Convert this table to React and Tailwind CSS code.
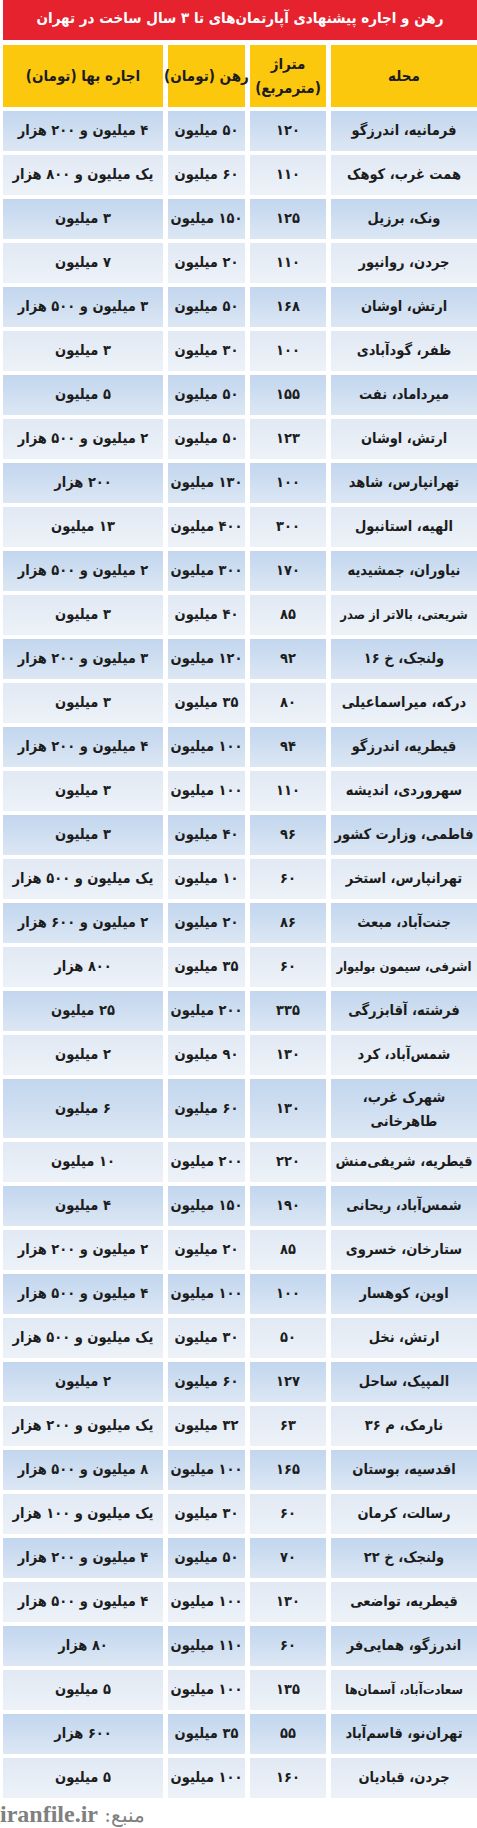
import React from "react";

const rows = [
  ["فرمانیه، اندرزگو", "۱۲۰", "۵۰ میلیون", "۴ میلیون و ۲۰۰ هزار"],
  ["همت غرب، کوهک", "۱۱۰", "۶۰ میلیون", "یک میلیون و ۸۰۰ هزار"],
  ["ونک، برزیل", "۱۲۵", "۱۵۰ میلیون", "۳ میلیون"],
  ["جردن، روانپور", "۱۱۰", "۲۰ میلیون", "۷ میلیون"],
  ["ارتش، اوشان", "۱۶۸", "۵۰ میلیون", "۳ میلیون و ۵۰۰ هزار"],
  ["ظفر، گودآبادی", "۱۰۰", "۳۰ میلیون", "۳ میلیون"],
  ["میرداماد، نفت", "۱۵۵", "۵۰ میلیون", "۵ میلیون"],
  ["ارتش، اوشان", "۱۲۳", "۵۰ میلیون", "۲ میلیون و ۵۰۰ هزار"],
  ["تهرانپارس، شاهد", "۱۰۰", "۱۳۰ میلیون", "۲۰۰ هزار"],
  ["الهیه، استانبول", "۳۰۰", "۴۰۰ میلیون", "۱۳ میلیون"],
  ["نیاوران، جمشیدیه", "۱۷۰", "۳۰۰ میلیون", "۲ میلیون و ۵۰۰ هزار"],
  ["شریعتی، بالاتر از صدر", "۸۵", "۴۰ میلیون", "۳ میلیون", "small"],
  ["ولنجک، خ ۱۶", "۹۲", "۱۲۰ میلیون", "۳ میلیون و ۲۰۰ هزار"],
  ["درکه، میراسماعیلی", "۸۰", "۳۵ میلیون", "۳ میلیون"],
  ["قیطریه، اندرزگو", "۹۴", "۱۰۰ میلیون", "۴ میلیون و ۲۰۰ هزار"],
  ["سهروردی، اندیشه", "۱۱۰", "۱۰۰ میلیون", "۳ میلیون"],
  ["فاطمی، وزارت کشور", "۹۶", "۴۰ میلیون", "۳ میلیون"],
  ["تهرانپارس، استخر", "۶۰", "۱۰ میلیون", "یک میلیون و ۵۰۰ هزار"],
  ["جنت‌آباد، مبعث", "۸۶", "۲۰ میلیون", "۲ میلیون و ۶۰۰ هزار"],
  ["اشرفی، سیمون بولیوار", "۶۰", "۳۵ میلیون", "۸۰۰ هزار", "small"],
  ["فرشته، آقابزرگی", "۳۳۵", "۲۰۰ میلیون", "۲۵ میلیون"],
  ["شمس‌آباد، کرد", "۱۳۰", "۹۰ میلیون", "۲ میلیون"],
  ["شهرک غرب، طاهرخانی", "۱۳۰", "۶۰ میلیون", "۶ میلیون", "tall"],
  ["قیطریه، شریفی‌منش", "۲۲۰", "۲۰۰ میلیون", "۱۰ میلیون"],
  ["شمس‌آباد، ریحانی", "۱۹۰", "۱۵۰ میلیون", "۴ میلیون"],
  ["ستارخان، خسروی", "۸۵", "۲۰ میلیون", "۲ میلیون و ۲۰۰ هزار"],
  ["اوین، کوهسار", "۱۰۰", "۱۰۰ میلیون", "۴ میلیون و ۵۰۰ هزار"],
  ["ارتش، نخل", "۵۰", "۳۰ میلیون", "یک میلیون و ۵۰۰ هزار"],
  ["المپیک، ساحل", "۱۲۷", "۶۰ میلیون", "۲ میلیون"],
  ["نارمک، م ۳۶", "۶۳", "۳۲ میلیون", "یک میلیون و ۲۰۰ هزار"],
  ["اقدسیه، بوستان", "۱۶۵", "۱۰۰ میلیون", "۸ میلیون و ۵۰۰ هزار"],
  ["رسالت، کرمان", "۶۰", "۳۰ میلیون", "یک میلیون و ۱۰۰ هزار"],
  ["ولنجک، خ ۲۲", "۷۰", "۵۰ میلیون", "۴ میلیون و ۲۰۰ هزار"],
  ["قیطریه، تواضعی", "۱۳۰", "۱۰۰ میلیون", "۴ میلیون و ۵۰۰ هزار"],
  ["اندرزگو، همایی‌فر", "۶۰", "۱۱۰ میلیون", "۸۰ هزار"],
  ["سعادت‌آباد، آسمان‌ها", "۱۳۵", "۱۰۰ میلیون", "۵ میلیون", "small"],
  ["تهران‌نو، قاسم‌آباد", "۵۵", "۳۵ میلیون", "۶۰۰ هزار"],
  ["جردن، قبادیان", "۱۶۰", "۱۰۰ میلیون", "۵ میلیون"],
];

// blue rows and pale rows alternate, both with a soft top-down fade
const Cell = ({ blue, children }) => (
  <div
    className={
      blue
        ? "flex items-center justify-center text-center whitespace-nowrap bg-linear-to-b from-[#c2d6ee] to-[#dce7f4]"
        : "flex items-center justify-center text-center whitespace-nowrap bg-linear-to-b from-[#e1e9f4] to-[#edf2f8]"
    }
  >
    {children}
  </div>
);

const HeadCell = ({ children }) => (
  <div className="flex items-center justify-center text-center whitespace-nowrap bg-[#fcc80e] leading-[24px]">
    {children}
  </div>
);

export default function App() {
  return (
    <div
      dir="rtl"
      className="w-[477px] h-[1828px] bg-white pl-[3px] overflow-hidden text-[#1c1c1c] font-['DejaVu_Sans_Condensed','DejaVu_Sans',sans-serif]"
    >
      <div className="h-[40px] bg-[#e5222d] flex items-center justify-center text-white font-bold text-[15px] pb-[3px] whitespace-nowrap">
        رهن و اجاره پیشنهادی آپارتمان‌های تا ۳ سال ساخت در تهران
      </div>

      <div className="mt-[5px] h-[62px] grid grid-cols-[146px_76px_77px_160px] gap-x-[5px] text-[15px] font-bold">
        <HeadCell>محله</HeadCell>
        <HeadCell>
          <span>
            متراژ
            <br />
            (مترمربع)
          </span>
        </HeadCell>
        <HeadCell>رهن (تومان)</HeadCell>
        <HeadCell>اجاره بها (تومان)</HeadCell>
      </div>

      <div className="mt-[4px] flex flex-col gap-[4px] text-[14.5px] font-bold">
        {rows.map(([name, area, rahn, rent, kind], i) => (
          <div
            key={i}
            className={
              kind === "tall"
                ? "h-[59px] grid grid-cols-[146px_76px_77px_160px] gap-x-[5px]"
                : "h-[40px] grid grid-cols-[146px_76px_77px_160px] gap-x-[5px]"
            }
          >
            <Cell blue={i % 2 === 0}>
              {kind === "tall" ? (
                <span className="whitespace-normal leading-[24px] px-7">{name}</span>
              ) : kind === "small" ? (
                <span className="text-[13px]">{name}</span>
              ) : (
                name
              )}
            </Cell>
            <Cell blue={i % 2 === 0}>{area}</Cell>
            <Cell blue={i % 2 === 0}>{rahn}</Cell>
            <Cell blue={i % 2 === 0}>{rent}</Cell>
          </div>
        ))}
      </div>

      <div className="h-[30px] flex items-end justify-end pb-[2px] text-[#808080] font-['Liberation_Serif','DejaVu_Serif',serif] text-[24px] leading-none -ml-[3px]">
        <span>
          <span className="font-['DejaVu_Serif',serif] text-[20px]">منبع: </span>
          <span className="font-bold">iranfile.ir</span>
        </span>
      </div>
    </div>
  );
}
